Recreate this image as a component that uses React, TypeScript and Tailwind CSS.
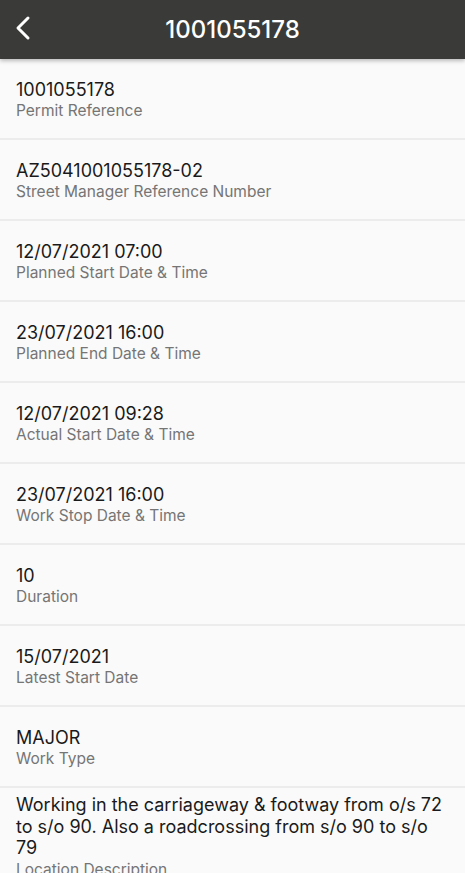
import React from 'react';

const rows: { value: string; label: string }[] = [
  { value: '1001055178', label: 'Permit Reference' },
  { value: 'AZ5041001055178-02', label: 'Street Manager Reference Number' },
  { value: '12/07/2021 07:00', label: 'Planned Start Date & Time' },
  { value: '23/07/2021 16:00', label: 'Planned End Date & Time' },
  { value: '12/07/2021 09:28', label: 'Actual Start Date & Time' },
  { value: '23/07/2021 16:00', label: 'Work Stop Date & Time' },
  { value: '10', label: 'Duration' },
  { value: '15/07/2021', label: 'Latest Start Date' },
  { value: 'MAJOR', label: 'Work Type' },
  {
    value: 'Working in the carriageway & footway from o/s 72 to s/o 90. Also a roadcrossing from s/o 90 to s/o 79',
    label: 'Location Description',
  },
];

export default function App() {
  return (
    <div className="min-h-screen bg-[#fafafa] font-['Inter',sans-serif]">
      {/* Header */}
      <header className="relative z-10 flex h-[59px] items-center bg-[#3a3b38] shadow-[0_2px_4px_rgba(0,0,0,0.25)]">
        <button className="absolute left-[14px] top-[15px] text-white">
          <svg width="20" height="26" viewBox="0 0 20 26" fill="none">
            <path d="M14 3 L4 13 L14 23" stroke="white" strokeWidth="3" strokeLinecap="round" strokeLinejoin="round" />
          </svg>
        </button>
        <h1 className="w-full text-center text-[24px] font-medium text-white">1001055178</h1>
      </header>

      {/* Detail list */}
      <div className="flex flex-col">
        {rows.map((r, i) => (
          <div
            key={i}
            className="flex min-h-[81px] flex-col justify-center border-b-2 border-[#ececec] px-4 pt-[6px] pb-[3px]"
          >
            <p className="text-[18px] leading-[21.5px] text-[#1a1a1a]">{r.value}</p>
            <p className="mt-[1px] text-[15.5px] leading-[20px] text-[#757575]">{r.label}</p>
          </div>
        ))}
      </div>
    </div>
  );
}
